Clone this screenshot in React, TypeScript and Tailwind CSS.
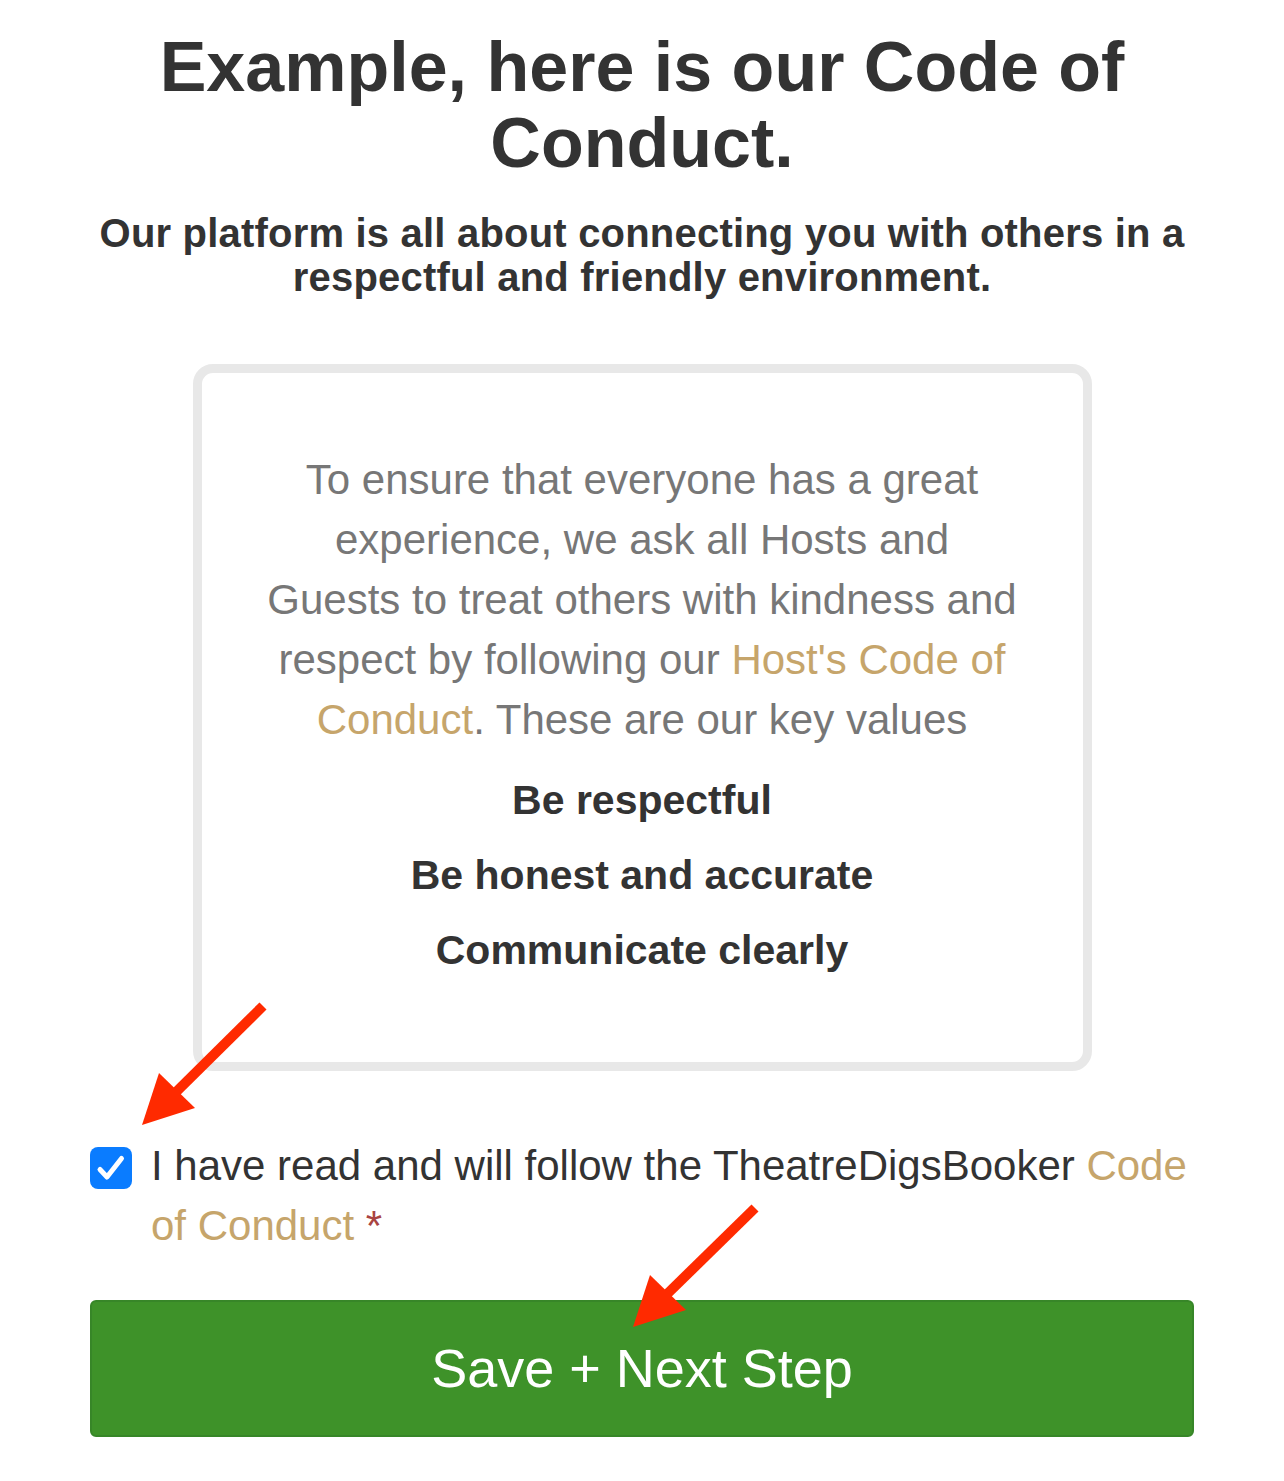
import React from 'react'

const Arrows = () => (
  <svg
    className="pointer-events-none absolute left-0 top-0"
    width={1284}
    height={1481}
    viewBox="0 0 1284 1481"
  >
    {/* arrow pointing at the checkbox */}
    <line x1={263} y1={1006} x2={170} y2={1098} stroke="#ff2a00" strokeWidth={10} />
    <polygon points="142,1125 159,1073 195,1108" fill="#ff2a00" />
    {/* arrow pointing at the button */}
    <line x1={755} y1={1208} x2={661} y2={1300} stroke="#ff2a00" strokeWidth={10} />
    <polygon points="633,1327 650,1275 686,1310" fill="#ff2a00" />
  </svg>
)

const App = () => {
  return (
    <div className="relative min-h-[1481px] bg-white font-['Liberation_Sans',Arial,sans-serif]">
      <div className="px-[90px] pt-[29px] pb-[44px] text-center">
        <h1 className="text-[70px] leading-[76px] font-bold text-[#333333]">
          Example, here is our Code of Conduct.
        </h1>
        <p className="mt-[30px] text-[40px] leading-[44px] font-bold tracking-[0.005em] text-[#333333]">
          Our platform is all about connecting you with others in a respectful and friendly environment.
        </p>

        {/* Code of conduct card */}
        <div className="mx-auto mt-[65px] w-[899px] rounded-[20px] border-[9px] border-[#e8e8e8] px-[40px] pt-[77px] pb-[82px]">
          <p className="text-[42px] leading-[60px] text-[#777777]">
            To ensure that everyone has a great
            <br />
            experience, we ask all Hosts and
            <br />
            Guests to treat others with kindness and
            <br />
            respect by following our <a className="text-[#c6a56b]">Host's Code of</a>
            <br />
            <a className="text-[#c6a56b]">Conduct</a>. These are our key values
          </p>
          <div className="mt-[20px] flex flex-col gap-[15px] text-[41px] leading-[60px] font-bold text-[#333333]">
            <p>Be respectful</p>
            <p>Be honest and accurate</p>
            <p>Communicate clearly</p>
          </div>
        </div>

        {/* Agreement */}
        <label className="mt-[65px] flex items-start gap-[19px] text-left">
          <span className="mt-[11px] flex h-[42px] w-[42px] shrink-0 rounded-[8px] bg-[#0a7cff]">
            <svg width={42} height={42} viewBox="0 0 42 42" fill="none">
              <path
                d="M10 22.5l7 7.5L31.5 11.5"
                stroke="white"
                strokeWidth={5}
                strokeLinecap="round"
                strokeLinejoin="round"
              />
            </svg>
          </span>
          <span className="text-[42px] leading-[60px] text-[#333333]">
            I have read and will follow the TheatreDigsBooker <a className="text-[#c6a56b]">Code</a>
            <br />
            <a className="text-[#c6a56b]">of Conduct</a> <span className="text-[#a94442]">*</span>
          </span>
        </label>

        <button className="mt-[44px] flex h-[137px] w-full items-center justify-center rounded-[6px] border-2 border-[#378628] bg-[#3e9229] text-[54px] text-white">
          Save + Next Step
        </button>
      </div>
      <Arrows />
    </div>
  )
}

export default App
